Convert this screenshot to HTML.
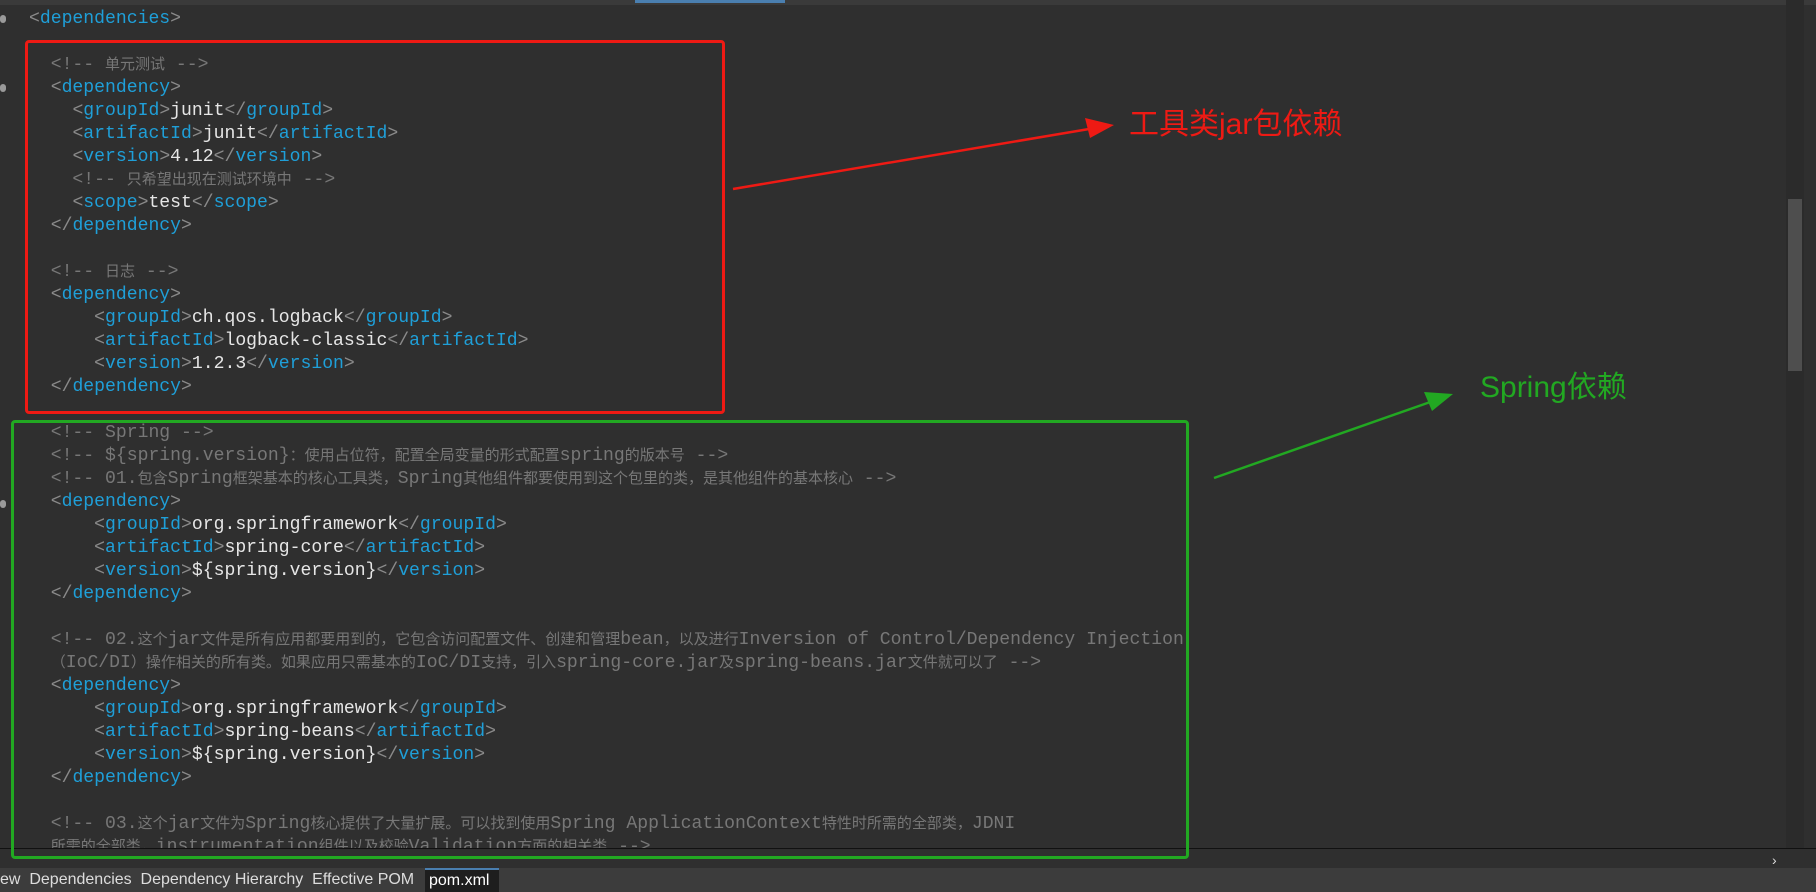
<!DOCTYPE html>
<html><head><meta charset="utf-8"><style>
html,body{margin:0;padding:0;}
body{width:1816px;height:892px;background:#2f2f2f;position:relative;overflow:hidden;font-family:"Liberation Mono","Noto Sans CJK SC",monospace;}
.l{position:absolute;left:29px;white-space:pre;font-size:18.1px;line-height:23px;height:23px;color:#e6e6e6;}
.b{color:#8a8a8a}.t{color:#1f9fd8}.c{color:#777}.c i{font-style:normal;font-size:15px}
.top{position:absolute;left:0;top:0;width:1816px;height:5px;background:#3a3a3a}
.gut{position:absolute;left:0;width:6px;height:8px;border-radius:4px;background:#9a9a9a}
</style></head><body>
<div class="top"></div>
<div style="position:absolute;left:635px;top:0;width:150px;height:3px;background:#4a7fb0"></div>
<div class="gut" style="top:15px"></div><div class="gut" style="top:84px"></div><div class="gut" style="top:500px"></div>

<div class="l" style="top:8px"><span class="b">&lt;</span><span class="t">dependencies</span><span class="b">&gt;</span></div>
<div class="l c" style="top:54px">  &lt;!-- <i>单元测试</i> --&gt;</div>
<div class="l" style="top:77px">  <span class="b">&lt;</span><span class="t">dependency</span><span class="b">&gt;</span></div>
<div class="l" style="top:100px">    <span class="b">&lt;</span><span class="t">groupId</span><span class="b">&gt;</span>junit<span class="b">&lt;/</span><span class="t">groupId</span><span class="b">&gt;</span></div>
<div class="l" style="top:123px">    <span class="b">&lt;</span><span class="t">artifactId</span><span class="b">&gt;</span>junit<span class="b">&lt;/</span><span class="t">artifactId</span><span class="b">&gt;</span></div>
<div class="l" style="top:146px">    <span class="b">&lt;</span><span class="t">version</span><span class="b">&gt;</span>4.12<span class="b">&lt;/</span><span class="t">version</span><span class="b">&gt;</span></div>
<div class="l c" style="top:169px">    &lt;!-- <i>只希望出现在测试环境中</i> --&gt;</div>
<div class="l" style="top:192px">    <span class="b">&lt;</span><span class="t">scope</span><span class="b">&gt;</span>test<span class="b">&lt;/</span><span class="t">scope</span><span class="b">&gt;</span></div>
<div class="l" style="top:215px">  <span class="b">&lt;/</span><span class="t">dependency</span><span class="b">&gt;</span></div>
<div class="l c" style="top:261px">  &lt;!-- <i>日志</i> --&gt;</div>
<div class="l" style="top:284px">  <span class="b">&lt;</span><span class="t">dependency</span><span class="b">&gt;</span></div>
<div class="l" style="top:307px">      <span class="b">&lt;</span><span class="t">groupId</span><span class="b">&gt;</span>ch.qos.logback<span class="b">&lt;/</span><span class="t">groupId</span><span class="b">&gt;</span></div>
<div class="l" style="top:330px">      <span class="b">&lt;</span><span class="t">artifactId</span><span class="b">&gt;</span>logback-classic<span class="b">&lt;/</span><span class="t">artifactId</span><span class="b">&gt;</span></div>
<div class="l" style="top:353px">      <span class="b">&lt;</span><span class="t">version</span><span class="b">&gt;</span>1.2.3<span class="b">&lt;/</span><span class="t">version</span><span class="b">&gt;</span></div>
<div class="l" style="top:376px">  <span class="b">&lt;/</span><span class="t">dependency</span><span class="b">&gt;</span></div>
<div class="l c" style="top:422px">  &lt;!-- Spring --&gt;</div>
<div class="l c" style="top:445px">  &lt;!-- ${spring.version}<i>：使用占位符，配置全局变量的形式配置</i>spring<i>的版本号</i> --&gt;</div>
<div class="l c" style="top:468px">  &lt;!-- 01.<i>包含</i>Spring<i>框架基本的核心工具类，</i>Spring<i>其他组件都要使用到这个包里的类，是其他组件的基本核心</i> --&gt;</div>
<div class="l" style="top:491px">  <span class="b">&lt;</span><span class="t">dependency</span><span class="b">&gt;</span></div>
<div class="l" style="top:514px">      <span class="b">&lt;</span><span class="t">groupId</span><span class="b">&gt;</span>org.springframework<span class="b">&lt;/</span><span class="t">groupId</span><span class="b">&gt;</span></div>
<div class="l" style="top:537px">      <span class="b">&lt;</span><span class="t">artifactId</span><span class="b">&gt;</span>spring-core<span class="b">&lt;/</span><span class="t">artifactId</span><span class="b">&gt;</span></div>
<div class="l" style="top:560px">      <span class="b">&lt;</span><span class="t">version</span><span class="b">&gt;</span>${spring.version}<span class="b">&lt;/</span><span class="t">version</span><span class="b">&gt;</span></div>
<div class="l" style="top:583px">  <span class="b">&lt;/</span><span class="t">dependency</span><span class="b">&gt;</span></div>
<div class="l c" style="top:629px">  &lt;!-- 02.<i>这个</i>jar<i>文件是所有应用都要用到的，它包含访问配置文件、创建和管理</i>bean<i>，以及进行</i>Inversion of Control/Dependency Injection</div>
<div class="l c" style="top:652px">  <i>（</i>IoC/DI<i>）操作相关的所有类。如果应用只需基本的</i>IoC/DI<i>支持，引入</i>spring-core.jar<i>及</i>spring-beans.jar<i>文件就可以了</i> --&gt;</div>
<div class="l" style="top:675px">  <span class="b">&lt;</span><span class="t">dependency</span><span class="b">&gt;</span></div>
<div class="l" style="top:698px">      <span class="b">&lt;</span><span class="t">groupId</span><span class="b">&gt;</span>org.springframework<span class="b">&lt;/</span><span class="t">groupId</span><span class="b">&gt;</span></div>
<div class="l" style="top:721px">      <span class="b">&lt;</span><span class="t">artifactId</span><span class="b">&gt;</span>spring-beans<span class="b">&lt;/</span><span class="t">artifactId</span><span class="b">&gt;</span></div>
<div class="l" style="top:744px">      <span class="b">&lt;</span><span class="t">version</span><span class="b">&gt;</span>${spring.version}<span class="b">&lt;/</span><span class="t">version</span><span class="b">&gt;</span></div>
<div class="l" style="top:767px">  <span class="b">&lt;/</span><span class="t">dependency</span><span class="b">&gt;</span></div>
<div class="l c" style="top:813px">  &lt;!-- 03.<i>这个</i>jar<i>文件为</i>Spring<i>核心提供了大量扩展。可以找到使用</i>Spring ApplicationContext<i>特性时所需的全部类，</i>JDNI</div>
<div class="l c" style="top:836px">  <i>所需的全部类，</i>instrumentation<i>组件以及校验</i>Validation<i>方面的相关类</i> --&gt;</div>

<!-- h scrollbar -->
<div style="position:absolute;left:0;top:848px;width:1816px;height:19px;background:#2f2f2f;border-top:1px solid #111"></div>
<div style="position:absolute;left:1772px;top:852px;color:#ddd;font-size:14px;font-family:'Liberation Sans',sans-serif">›</div>
<!-- v scrollbar -->
<div style="position:absolute;left:1786px;top:0;width:18px;height:848px;background:#2b2b2b"></div>
<div style="position:absolute;left:1788px;top:199px;width:14px;height:172px;background:#4e4e4e"></div>
<!-- bottom tabs -->
<div style="position:absolute;left:0;top:868px;width:1816px;height:24px;background:#3c3c3c;font-family:'Liberation Sans',sans-serif;font-size:16px;color:#ddd;line-height:24px;white-space:pre">ew  Dependencies  Dependency Hierarchy  Effective POM  </div>
<div style="position:absolute;left:425px;top:868px;width:74px;height:24px;background:#1e1e1e;border-top:2px solid #4a7fb0;box-sizing:border-box;font-family:'Liberation Sans',sans-serif;font-size:16px;color:#fff;line-height:21px;padding-left:4px">pom.xml</div>

<!-- annotations -->
<div style="position:absolute;left:25px;top:40px;width:700px;height:374px;border:3px solid #ee1a14;border-radius:4px;box-sizing:border-box"></div>
<div style="position:absolute;left:11px;top:420px;width:1178px;height:439px;border:3px solid #22a822;border-radius:4px;box-sizing:border-box"></div>
<svg style="position:absolute;left:0;top:0" width="1816" height="892">
<line x1="733" y1="189" x2="1095" y2="128" stroke="#ee1a14" stroke-width="2.5"/>
<polygon points="1114,125 1085,118 1090,138" fill="#ee1a14"/>
<line x1="1214" y1="478" x2="1436" y2="400" stroke="#22a822" stroke-width="2.5"/>
<polygon points="1453,394 1424,392 1432,411" fill="#22a822"/>
</svg>
<div style="position:absolute;left:1129px;top:106px;font-family:'Liberation Sans','Noto Sans CJK SC',sans-serif;font-size:30px;color:#ee1a14;line-height:38px">工具类jar包依赖</div>
<div style="position:absolute;left:1480px;top:369px;font-family:'Liberation Sans','Noto Sans CJK SC',sans-serif;font-size:30px;color:#22a822;line-height:38px">Spring依赖</div>
</body></html>
